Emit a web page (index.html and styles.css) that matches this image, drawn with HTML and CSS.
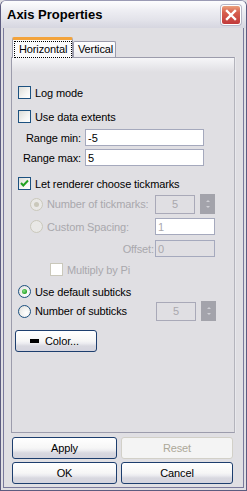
FILE: index.html
```html
<!DOCTYPE html>
<html lang="en">
<head>
  <meta charset="UTF-8">
  <title>Axis Properties</title>
  <link rel="stylesheet" href="styles.css">
</head>
<body>

  <div class="window">
    <div class="titlebar">
      <span class="title">Axis Properties</span>
      <span class="close">
        <svg width="12" height="12" viewBox="0 0 12 12"><path d="M2 2 L10 10 M10 2 L2 10" stroke="#fff" stroke-width="2.4" stroke-linecap="square"/></svg>
      </span>
    </div>

    <div class="dialog">
      <div class="tabs">
        <div class="tab active"><span class="focus">Horizontal</span></div>
        <div class="tab">Vertical</div>
      </div>

      <div class="page">
        <div class="row r-log">
          <span class="box"></span><span class="lbl">Log mode</span>
        </div>
        <div class="row r-extents">
          <span class="box"></span><span class="lbl">Use data extents</span>
        </div>
        <div class="row field r-min">
          <span class="flabel">Range min:</span><input class="text wide" value="-5">
        </div>
        <div class="row field r-max">
          <span class="flabel">Range max:</span><input class="text wide" value="5">
        </div>
        <div class="row r-let">
          <span class="box checked">
            <svg width="11" height="11" viewBox="0 0 11 11"><path d="M2 5 L4.3 7.5 L9 2.5" fill="none" stroke="#21a121" stroke-width="2"/></svg>
          </span><span class="lbl">Let renderer choose tickmarks</span>
        </div>
        <div class="row r-numtick">
          <span class="radio off selected"></span><span class="lbl grey w-tick">Number of tickmarks:</span>
          <span class="spin off">5</span><span class="spinbtn"><i class="up"></i><i class="down"></i></span>
        </div>
        <div class="row r-custom">
          <span class="radio off"></span><span class="lbl grey w-tick">Custom Spacing:</span>
          <input class="text small greytext" value="1">
        </div>
        <div class="row r-offset">
          <span class="flabel grey w-off">Offset:</span>
          <input class="text small greytext off" value="0">
        </div>
        <div class="row r-pi">
          <span class="box off"></span><span class="lbl grey">Multiply by Pi</span>
        </div>
        <div class="row r-default">
          <span class="radio selected"></span><span class="lbl">Use default subticks</span>
        </div>
        <div class="row r-numsub">
          <span class="radio"></span><span class="lbl w-sub">Number of subticks</span>
          <span class="spin off">5</span><span class="spinbtn"><i class="up"></i><i class="down"></i></span>
        </div>
        <div class="row r-color">
          <button class="btn color"><span class="swatch"></span>Color...</button>
        </div>
      </div>

      <div class="buttons">
        <button class="btn">Apply</button>
        <button class="btn disabled">Reset</button>
        <button class="btn">OK</button>
        <button class="btn">Cancel</button>
      </div>
    </div>
  </div>

</body>
</html>
```

FILE: styles.css
```css
body {
  margin: 0;
  background-color: #e0dfe3;
  font-family: "Liberation Sans", Arial, sans-serif;
  font-size: 11px;
  letter-spacing: -0.12px;
  color: #000;
}

.window {
  width: 247px;
  height: 491px;
  box-sizing: border-box;
  border: 1px solid #5c5c80;
  border-top-color: #9a9ab4;
  border-radius: 6px 6px 0 0;
  background-color: #e0dfe3;
  display: flex;
  flex-direction: column;
  overflow: hidden;
}

.titlebar {
  height: 27px;
  flex: none;
  display: flex;
  align-items: center;
  justify-content: space-between;
  padding: 0 5px 0 6px;
  background: linear-gradient(#fdfdfe 0, #eeeef3 35%, #e3e3ea 70%, #d6d6e0 100%);
}

.title {
  font-size: 13px;
  font-weight: bold;
  letter-spacing: 0;
  color: #000;
}

.close {
  width: 20px;
  height: 20px;
  box-sizing: border-box;
  border: 1px solid #fff;
  border-radius: 3px;
  background: linear-gradient(#eba27d 0, #d8604f 35%, #c1393b 100%);
  box-shadow: 0 0 0 1px #b7b7c7;
  display: flex;
  align-items: center;
  justify-content: center;
}

.dialog {
  flex: 1;
  margin: 0 2px 2px 2px;
  border: 1px solid #7a7a9c;
  border-top: none;
  padding: 9px 0 0 7px;
}

/* onglets */
.tabs {
  display: flex;
  align-items: flex-end;
  height: 20px;
  margin-left: 1px;
}

.tab {
  box-sizing: border-box;
  height: 16px;
  width: 43px;
  padding-left: 4px;
  border: 1px solid #9c9cac;
  border-bottom: none;
  border-radius: 2px 2px 0 0;
  background: linear-gradient(#fefefe, #ebebef);
  line-height: 15px;
}

.tab.active {
  position: relative;
  z-index: 1;
  width: 61px;
  height: 21px;
  margin-bottom: -1px;
  padding: 1px 0 0 1px;
  border-top: 3px solid #f3a33b;
  background: #fbfbfc;
  line-height: 15px;
}

.focus {
  display: inline-block;
  padding: 0 4px 0 4px;
  border: 1px dotted #000;
  line-height: 15px;
}

.page {
  box-sizing: border-box;
  width: 224px;
  height: 376px;
  border: 1px solid #9c9cac;
  border-right: 1px solid #b4b4bc;
  box-shadow: 1px 0 0 #e8e8ec;
  background: linear-gradient(#f6f6f8 0, #e0dfe3 14px);
  padding-left: 6px;
}

.row {
  display: flex;
  align-items: center;
  height: 13px;
}

.lbl {
  margin-left: 4px;
  white-space: nowrap;
}

.grey, .greytext {
  color: #a9a8ad;
}

.r-log { margin-top: 28px; }
.r-extents { margin-top: 11px; }
.r-min { margin-top: 6px; height: 17px; }
.r-max { margin-top: 3px; height: 17px; }
.r-let { margin-top: 11px; }
.r-numtick { margin-top: 4px; height: 20px; padding-left: 12px; }
.r-custom { margin-top: 4px; height: 17px; padding-left: 12px; }
.r-offset { margin-top: 5px; height: 17px; }
.r-pi { margin-top: 6px; padding-left: 32px; }
.r-default { margin-top: 9px; }
.r-numsub { margin-top: 4px; height: 18px; }
.r-color { margin-top: 10px; height: 22px; margin-left: -3px; }

.flabel {
  box-sizing: border-box;
  width: 73px;
  margin-left: -6px;
  padding-right: 4px;
  text-align: right;
  white-space: nowrap;
  flex: none;
}

.w-off {
  width: 143px;
  padding-right: 1px;
}

.w-tick { width: 108px; flex: none; }
.w-sub { width: 121px; flex: none; }

/* cases et boutons radio */
.box {
  width: 13px;
  height: 13px;
  box-sizing: border-box;
  border: 1px solid #1c5180;
  background: linear-gradient(135deg, #dcdcd7 0, #f5f5f3 60%, #fff 100%);
  display: flex;
  align-items: center;
  justify-content: center;
  flex: none;
}

.box.off {
  border-color: #cac8bb;
  background: #fff;
}

.radio {
  width: 13px;
  height: 13px;
  box-sizing: border-box;
  border: 1px solid #1c5180;
  border-radius: 50%;
  background: radial-gradient(circle at 65% 65%, #fff 0, #f0f0ee 50%, #d6d6d0 100%);
  flex: none;
  position: relative;
}

.radio.selected::after {
  content: "";
  position: absolute;
  left: 3px;
  top: 3px;
  width: 5px;
  height: 5px;
  border-radius: 50%;
  background: radial-gradient(circle at 40% 40%, #8ce08c 0, #21a121 70%);
}

.radio.off {
  border-color: #cac8bb;
  background: #e9e8e6;
}

.radio.off.selected::after {
  background: #cac8bb;
}

/* champs */
.text {
  box-sizing: border-box;
  height: 17px;
  border: 1px solid #a5a9bd;
  padding: 0 2px;
  font-family: inherit;
  font-size: 11px;
  background: #fff;
  outline: none;
  flex: none;
}

.wide { width: 119px; }
.small { width: 60px; }

.text.off {
  background: #e0dfe3;
}

.spin {
  box-sizing: border-box;
  width: 40px;
  height: 19px;
  border: 1px solid #a9a9b8;
  color: #a9a8ad;
  text-align: center;
  line-height: 17px;
  flex: none;
}

.spinbtn {
  width: 15px;
  height: 20px;
  margin-left: 5px;
  background: #a3a3ab;
  display: flex;
  flex-direction: column;
  align-items: center;
  justify-content: center;
  gap: 4px;
  flex: none;
}

.spinbtn i {
  width: 0;
  height: 0;
  border-left: 2px solid transparent;
  border-right: 2px solid transparent;
}

.spinbtn .up { border-bottom: 2px solid #d0d0d6; }
.spinbtn .down { border-top: 2px solid #d0d0d6; }

/* boutons */
.btn {
  box-sizing: border-box;
  height: 22px;
  border: 1px solid #1d3e6e;
  border-radius: 3px;
  background: linear-gradient(#ffffff 0, #f6f6f6 50%, #ececf0 62%, #d8d8e0 75%, #d4d4de 100%);
  font-family: inherit;
  font-size: 11px;
  letter-spacing: -0.12px;
  color: #000;
  padding: 0;
}

.btn.disabled {
  border-color: #d2d0c8;
  background: #f4f4f4;
  color: #aca899;
}

.color {
  width: 82px;
  display: flex;
  align-items: center;
  padding-left: 14px;
  gap: 6px;
}

.swatch {
  width: 9px;
  height: 4px;
  background: #000;
}

.buttons {
  display: grid;
  grid-template-columns: 105px 112px;
  column-gap: 4px;
  row-gap: 3px;
  margin: 4px 0 0 1px;
}
```
